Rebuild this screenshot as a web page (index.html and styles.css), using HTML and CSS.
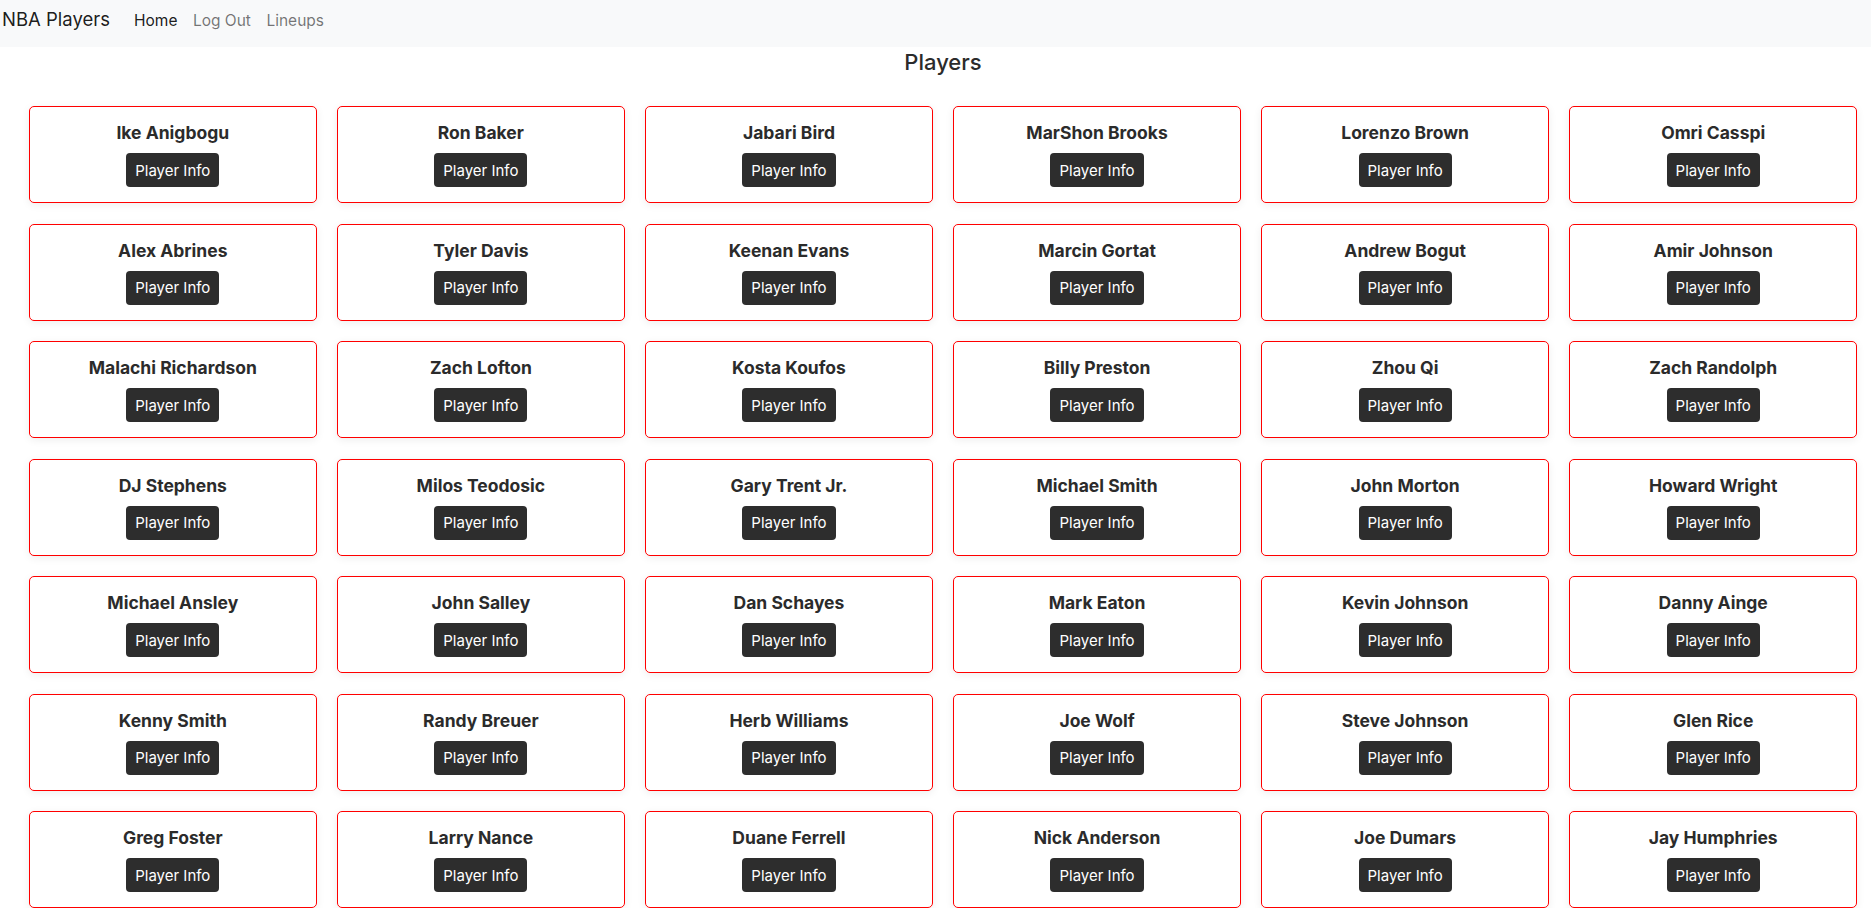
FILE: index.html
```html
<!DOCTYPE html>
<html lang="en">
<head>
<meta charset="utf-8">
<title>NBA Players</title>
<link rel="stylesheet" href="styles.css">
</head>
<body>
<nav class="navbar">
  <a class="brand" href="#">NBA Players</a>
  <div class="nav-links">
    <a class="nav-link active" href="#">Home</a>
    <a class="nav-link" href="#">Log Out</a>
    <a class="nav-link" href="#">Lineups</a>
  </div>
</nav>
<main class="content">
  <h1 class="page-title">Players</h1>
  <div class="grid">
    <div class="card"><div class="name">Ike Anigbogu</div><button class="btn">Player Info</button></div>
    <div class="card"><div class="name">Ron Baker</div><button class="btn">Player Info</button></div>
    <div class="card"><div class="name">Jabari Bird</div><button class="btn">Player Info</button></div>
    <div class="card"><div class="name">MarShon Brooks</div><button class="btn">Player Info</button></div>
    <div class="card"><div class="name">Lorenzo Brown</div><button class="btn">Player Info</button></div>
    <div class="card"><div class="name">Omri Casspi</div><button class="btn">Player Info</button></div>
    <div class="card"><div class="name">Alex Abrines</div><button class="btn">Player Info</button></div>
    <div class="card"><div class="name">Tyler Davis</div><button class="btn">Player Info</button></div>
    <div class="card"><div class="name">Keenan Evans</div><button class="btn">Player Info</button></div>
    <div class="card"><div class="name">Marcin Gortat</div><button class="btn">Player Info</button></div>
    <div class="card"><div class="name">Andrew Bogut</div><button class="btn">Player Info</button></div>
    <div class="card"><div class="name">Amir Johnson</div><button class="btn">Player Info</button></div>
    <div class="card"><div class="name">Malachi Richardson</div><button class="btn">Player Info</button></div>
    <div class="card"><div class="name">Zach Lofton</div><button class="btn">Player Info</button></div>
    <div class="card"><div class="name">Kosta Koufos</div><button class="btn">Player Info</button></div>
    <div class="card"><div class="name">Billy Preston</div><button class="btn">Player Info</button></div>
    <div class="card"><div class="name">Zhou Qi</div><button class="btn">Player Info</button></div>
    <div class="card"><div class="name">Zach Randolph</div><button class="btn">Player Info</button></div>
    <div class="card"><div class="name">DJ Stephens</div><button class="btn">Player Info</button></div>
    <div class="card"><div class="name">Milos Teodosic</div><button class="btn">Player Info</button></div>
    <div class="card"><div class="name">Gary Trent Jr.</div><button class="btn">Player Info</button></div>
    <div class="card"><div class="name">Michael Smith</div><button class="btn">Player Info</button></div>
    <div class="card"><div class="name">John Morton</div><button class="btn">Player Info</button></div>
    <div class="card"><div class="name">Howard Wright</div><button class="btn">Player Info</button></div>
    <div class="card"><div class="name">Michael Ansley</div><button class="btn">Player Info</button></div>
    <div class="card"><div class="name">John Salley</div><button class="btn">Player Info</button></div>
    <div class="card"><div class="name">Dan Schayes</div><button class="btn">Player Info</button></div>
    <div class="card"><div class="name">Mark Eaton</div><button class="btn">Player Info</button></div>
    <div class="card"><div class="name">Kevin Johnson</div><button class="btn">Player Info</button></div>
    <div class="card"><div class="name">Danny Ainge</div><button class="btn">Player Info</button></div>
    <div class="card"><div class="name">Kenny Smith</div><button class="btn">Player Info</button></div>
    <div class="card"><div class="name">Randy Breuer</div><button class="btn">Player Info</button></div>
    <div class="card"><div class="name">Herb Williams</div><button class="btn">Player Info</button></div>
    <div class="card"><div class="name">Joe Wolf</div><button class="btn">Player Info</button></div>
    <div class="card"><div class="name">Steve Johnson</div><button class="btn">Player Info</button></div>
    <div class="card"><div class="name">Glen Rice</div><button class="btn">Player Info</button></div>
    <div class="card"><div class="name">Greg Foster</div><button class="btn">Player Info</button></div>
    <div class="card"><div class="name">Larry Nance</div><button class="btn">Player Info</button></div>
    <div class="card"><div class="name">Duane Ferrell</div><button class="btn">Player Info</button></div>
    <div class="card"><div class="name">Nick Anderson</div><button class="btn">Player Info</button></div>
    <div class="card"><div class="name">Joe Dumars</div><button class="btn">Player Info</button></div>
    <div class="card"><div class="name">Jay Humphries</div><button class="btn">Player Info</button></div>
  </div>
</main>
</body>
</html>
```

FILE: styles.css
```css
* { box-sizing: border-box; }

body {
  margin: 0;
  font-family: Inter, "Helvetica Neue", Arial, sans-serif;
  color: #212529;
  background: #fff;
}

.navbar {
  display: flex;
  align-items: baseline;
  height: 47px;
  padding: 8px 0 0 2px;
  background: #f8f9fa;
}

.brand {
  font-size: 18.5px;
  line-height: 22px;
  color: rgba(0, 0, 0, 0.9);
  text-decoration: none;
  margin-right: 24px;
}

.nav-links {
  display: flex;
  align-items: baseline;
  gap: 15.5px;
}

.nav-link {
  font-size: 15.5px;
  color: rgba(0, 0, 0, 0.55);
  text-decoration: none;
}

.nav-link.active {
  color: rgba(0, 0, 0, 0.9);
}

.content {
  padding: 0 14px 0 29px;
}

.page-title {
  margin: 2px 0 0;
  text-align: center;
  font-size: 22px;
  font-weight: 500;
  line-height: 1.2;
  color: #2b2b2b;
}

.grid {
  display: grid;
  grid-template-columns: repeat(6, 1fr);
  column-gap: 20.5px;
  row-gap: 20.5px;
  margin-top: 31px;
}

.card {
  height: 97px;
  border: 1px solid #ff0000;
  border-radius: 5px;
  box-shadow: 0 2px 8px rgba(0, 0, 0, 0.07);
  display: flex;
  flex-direction: column;
  align-items: center;
  padding-top: 15px;
}

.name {
  font-size: 17.5px;
  font-weight: 700;
  line-height: 22px;
  color: #2b2b2b;
}

.btn {
  margin-top: 9px;
  height: 34px;
  padding: 0 9px;
  border: none;
  border-radius: 4px;
  background: #2d2d2d;
  color: #fff;
  font-family: Inter, "Helvetica Neue", Arial, sans-serif;
  font-size: 15px;
}
```
